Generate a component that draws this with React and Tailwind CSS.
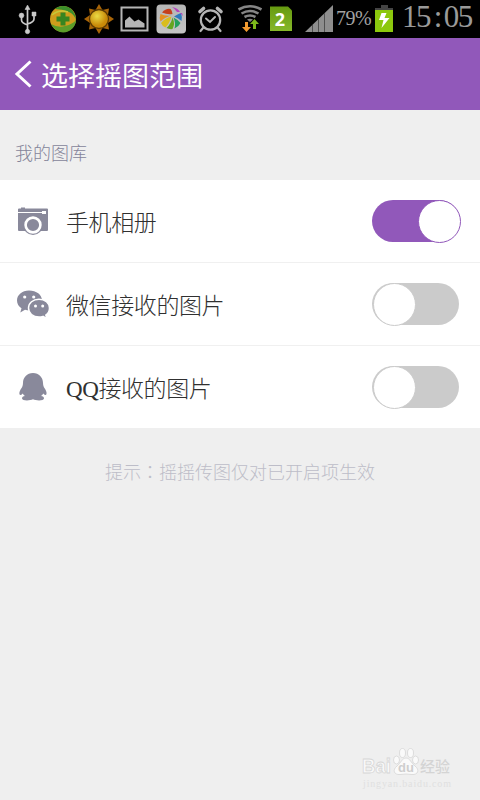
function StatusBar() {
  return (
    <header className="flex h-[38px] w-full items-start bg-black">
      <svg width="304" height="38" viewBox="0 0 304 38" className="shrink-0">
        <defs>
          <radialGradient id="sun" cx="40%" cy="35%">
            <stop offset="0" stopColor="#eadb45" />
            <stop offset="1" stopColor="#c98a09" />
          </radialGradient>
          <linearGradient id="tile" x2="0" y2="1">
            <stop offset="0" stopColor="#b5b5b5" />
            <stop offset="1" stopColor="#c4c4c4" />
          </linearGradient>
          <linearGradient id="sim" x2="0" y2="1">
            <stop offset="0" stopColor="#669a10" />
            <stop offset="1" stopColor="#86b82a" />
          </linearGradient>
        </defs>

        {/* usb */}
        <g fill="#c9c9c9" stroke="#c9c9c9">
          <path d="M27.5 31V8M21.5 16v4q0 3 6 5M34 14v5q0 3-6.5 5" fill="none" strokeWidth="1.7" />
          <path d="M27.5 5l2.5 4.5h-5z" strokeWidth=".5" />
          <circle cx="21.5" cy="15.5" r="2.4" strokeWidth=".6" />
          <path d="M32 12h4v4h-4z" strokeWidth=".5" />
          <circle cx="27.5" cy="31.5" r="2.2" strokeWidth=".6" />
        </g>

        {/* security */}
        <circle cx="63" cy="19" r="13" fill="#cf9d1c" />
        <path d="M55 9C61 4 69 6 73 11q3 4 3 9-2-6-7-8-7-3-14-3z" fill="#3b8f2b" />
        <path d="M51 24q7 4 14 2 8-2 11-6c0 8-8 14-16 12q-6-2-9-8z" fill="#5b9c29" />
        <path d="M52 15q7-6 16-3" fill="none" stroke="#c5c938" strokeWidth="1.5" />
        <path d="M60.5 12.500h5v4h4v5h-4v4h-5v-4h-4v-5h4z" fill="#378520" />

        {/* weather */}
        <path d="M99 4l3.500 6 6.500-1.500-1 6.500 6 4-6 4 1 6.500-6.500-1.500L99 34l-3.500-6-6.500 1.500 1-6.500-6-4 6-4-1-6.500 6.500 1.500z" fill="#a96508" />
        <circle cx="99" cy="19" r="9.500" fill="url(#sun)" stroke="#5b3a03" strokeWidth="1.3" />

        {/* picture */}
        <path d="M121.500 7.500h26v23h-26z" fill="none" stroke="#b5b5b5" strokeWidth="2" />
        <path d="M125 27.500v-7l4.500-4 5 5 4-2 6 4v4z" fill="#b5b5b5" />

        {/* gallery app */}
        <rect x="156.500" y="4.500" width="29.500" height="29" rx="4" fill="url(#tile)" />
        <path d="M162 12.500q4-4.500 8.500-3.500 2 2 2 5-5 1-10.500-1.500z" fill="#c5401c" />
        <path d="M160.500 14q5 2.500 11 1.500-6.500 1.500-11 6-1.500-4 0-7.500z" fill="#e5911f" />
        <path d="M161 23q4-5 10.500-6.500-2 7-6 11-3.500-1.500-4.500-4.500z" fill="#d9bd1c" />
        <path d="M172.500 17.500q3 6.500 0 11.500-3 .5-6-1 4.500-4 6-10.500z" fill="#65a51f" />
        <path d="M173.500 17.500q5 2.500 7 5.500-2 4-6 5.500 1.500-5.500-1-11z" fill="#24a05c" />
        <path d="M174 16.500q3.500-2.500 7-3.500 1.500 4 .5 8-3-3-7.500-4.500z" fill="#2d79bd" />
        <path d="M172 7q6 1 8 5h-3q-2-3-5-5zM180 13h2l1 3z" fill="#b443bd" />

        {/* alarm */}
        <g fill="none" stroke="#b5b5b5" strokeLinecap="round">
          <circle cx="210.500" cy="20" r="9.700" strokeWidth="2.200" />
          <path d="M206 18.500l4 3.500 5-5" strokeWidth="2" />
          <path d="M200 11.500l3.500-3M221 11.500l-3.500-3" strokeWidth="3.600" />
          <path d="M203 28l-2.500 3M218 28l2.500 3" strokeWidth="2.200" />
        </g>

        {/* wifi */}
        <g fill="none" stroke="#858585" strokeWidth="2.600">
          <path d="M238.500 9.500q11.500-6.500 23 0M241.500 13.500q8.500-5 17 0M244.500 17q5.500-3 11 0" />
        </g>
        <path d="M247 19.500q3-1.500 6 0l-3 2.500z" fill="#858585" />
        <path d="M245 22h3v5h3l-4.500 5-4.500-5h3z" fill="#f29b30" />
        <path d="M253 29v-5h-3l4.500-5 4.500 5h-3v5z" fill="#7db91b" />

        {/* sim slot */}
        <path d="M270 6.500h18l4 4v20.500h-22z" fill="url(#sim)" />
        <text x="280" y="25.500" textAnchor="middle" className="fill-white font-['Open_Sans',sans-serif] text-[18px] font-bold">2</text>
      </svg>

      <svg width="32" height="38" viewBox="304 0 32 38" className="shrink-0">
        <path d="M305 32L333 5v27z" fill="#8e8e8e" />
        <path d="M312.500 25v7M318.500 19v13M324.500 13v19" stroke="#505050" strokeWidth="1" />
      </svg>
      <span className="mt-[6px] w-[38px] shrink-0 whitespace-nowrap font-['Liberation_Serif',serif] text-[20px] leading-[25px] tracking-[-0.5px] text-[#a2a2a2]">
        79%
      </span>
      <svg width="22" height="38" viewBox="374 0 22 38" className="shrink-0">
        <path d="M381 5h7v3h5v3h-18V8h6z" fill="#444" />
        <path d="M375 10h18v22h-18z" fill="#8cc80d" />
        <path d="M381.500 13h5l-2 5h5L381.500 28l2-8h-4.500z" fill="white" />
      </svg>
      <span className="ml-[6px] whitespace-nowrap font-['Liberation_Serif',serif] text-[31px] leading-[34px] tracking-[-1.6px] text-[#9a9a9a]">
        15<span className="pl-[4px] pr-[3px]">:</span>05
      </span>
    </header>
  )
}

function CameraIcon() {
  return (
    <svg width="32" height="30" viewBox="0 0 32 30" fill="#89899b">
      <path d="M1 3.500q0-1 1-1h2v-1h4v1h22q1 0 1 1V24q0 1-1 1H2q-1 0-1-1z" />
      <path d="M1 6h24V5h4v3h-4V7H1z" fill="white" />
      <circle cx="16" cy="19" r="10" />
      <circle cx="16" cy="19" r="7.400" fill="none" stroke="white" strokeWidth="2.600" />
    </svg>
  )
}

function WechatIcon() {
  return (
    <svg width="34" height="30" viewBox="0 0 34 30" fill="#89899b">
      <path d="M12 1.500C5 1.500 0 6 0 11.500c0 3.200 1.700 6 4.500 7.700L3.300 23.500l4.700-2.700q2 .7 4.500.7c7 0 12.500-4.300 12.500-10S19.500 1.500 12 1.500z" />
      <path d="M22 10.200c-6 0-10.500 3.800-10.500 8.900S16 28 22 28q2.200 0 4-.6l4 2.200-1.200-3.500c2.300-1.500 3.700-4 3.700-7 0-5.100-4.500-8.900-10.500-8.900z" stroke="white" strokeWidth="1.500" />
      <g fill="white">
        <circle cx="7.700" cy="8" r="1.600" />
        <circle cx="16.700" cy="8" r="1.600" />
        <circle cx="18.500" cy="17" r="1.500" />
        <circle cx="25.700" cy="17" r="1.500" />
      </g>
    </svg>
  )
}

function QqIcon() {
  return (
    <svg width="32" height="30" viewBox="0 0 32 30" fill="#89899b">
      <path d="M16 1C10 1 6 5.500 6 11q0 2-.8 4C3 18 1.500 21.500 3 23q1.500 0 2.800-1.500.7 1.500 2.200 2.500-3 0-3 2.500c0 2.500 8 2.300 11 .8 3 1.500 11 1.700 11-.8q0-2.500-3-2.500 1.500-1 2.200-2.500Q27.500 23 29 23c1.500-1.500 0-5-2.200-8q-.8-2-.8-4C26 5.500 22 1 16 1z" />
    </svg>
  )
}

function Toggle({ on }) {
  return (
    <div className="flex h-[43px] w-[89px] items-start">
      <div
        className={
          on
            ? 'flex h-[42px] w-[88px] justify-end rounded-full bg-[#9158ba]'
            : 'flex h-[42px] w-[87px] justify-start rounded-full bg-[#cbcbcb]'
        }
      >
        <span
          className={
            on
              ? '-mr-px h-[43px] w-[43px] shrink-0 rounded-full border border-[#9158ba] bg-white'
              : 'ml-px h-[43px] w-[43px] shrink-0 rounded-full border border-[#cbcbcb] bg-white'
          }
        />
      </div>
    </div>
  )
}

const sources = [
  { label: '手机相册', Icon: CameraIcon, on: true },
  { label: '微信接收的图片', Icon: WechatIcon, on: false },
  { label: 'QQ接收的图片', Icon: QqIcon, on: false },
]

function Watermark() {
  return (
    <svg width="100" height="56" viewBox="0 0 100 56">
      <g fill="#fafafa" stroke="#d6d6d6" strokeWidth=".8">
        <text x="2" y="29" textLength="29" lengthAdjust="spacingAndGlyphs" className="font-['Liberation_Sans',sans-serif] text-[20px] font-bold">Bai</text>
        <ellipse cx="36.500" cy="16" rx="3" ry="4" />
        <ellipse cx="42.500" cy="9" rx="3" ry="4.500" />
        <ellipse cx="50.500" cy="9" rx="3" ry="4.500" />
        <ellipse cx="55.500" cy="16" rx="3" ry="4" />
        <path d="M46 14c-4 0-5 5-9 8-5 4-3 9 3 8.500q6-1 12 0c6 .5 8-4.500 3-8.500-4-3-5-8-9-8z" />
      </g>
      <text x="38" y="28" className="fill-[#cecece] font-['Liberation_Sans',sans-serif] text-[13px] font-bold">du</text>
      <text x="60" y="28" className="fill-[#d4d4d4] font-['Noto_Sans_CJK_SC',sans-serif] text-[15px] font-medium">经验</text>
      <text x="3" y="43" textLength="88" className="fill-[#e0e0e0] font-['Liberation_Serif',serif] text-[10px]">jingyan.baidu.com</text>
    </svg>
  )
}

export default function App() {
  return (
    <main className="flex h-[800px] w-[480px] flex-col overflow-hidden bg-[#efefef] font-['Liberation_Serif','Noto_Sans_CJK_SC',sans-serif]">
      <StatusBar />

      <div className="flex h-[72px] shrink-0 items-center bg-[#9158ba] pl-[14px] text-white">
        <svg width="19" height="30" viewBox="0 0 19 30" fill="none" stroke="currentColor" strokeWidth="3">
          <path d="M16.5 2.5L3 15l13.500 12.500" />
        </svg>
        <h1 className="ml-2 pt-[5px] text-[27px] font-normal leading-[40px]">选择摇图范围</h1>
      </div>

      <h2 className="h-[70px] shrink-0 pl-[15px] pt-[31px] text-[18px] font-light leading-[27px] text-[#85859a]">
        我的图库
      </h2>

      <section className="shrink-0 bg-white">
        {sources.map(({ label, Icon, on }, i) => (
          <div
            key={label}
            className={`flex items-center pl-[17px] pr-[19px] ${i < 2 ? 'h-[83px] border-b border-[#f0f0f0]' : 'h-[82px]'}`}
          >
            <div className="w-[49px]">
              <Icon />
            </div>
            <span className="pt-[5px] text-[23px] font-light leading-[34px] tracking-[-0.4px] text-[#303030]">{label}</span>
            <div className="ml-auto">
              <Toggle on={on} />
            </div>
          </div>
        ))}
      </section>

      <p className="pt-[30px] text-center font-['Noto_Sans_CJK_TC',sans-serif] text-[18px] font-light leading-[27px] text-[#bdbdc8]">
        提示：摇摇传图仅对已开启项生效
      </p>

      <div className="mt-auto flex h-[56px] shrink-0 justify-end pr-[20px]">
        <Watermark />
      </div>
    </main>
  )
}
